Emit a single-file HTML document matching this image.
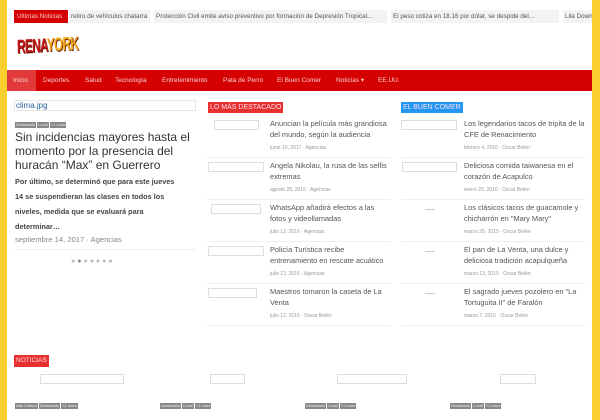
<!DOCTYPE html>
<html><head><meta charset="utf-8"><style>
*{margin:0;padding:0;box-sizing:border-box}
body{width:600px;height:400px;overflow:hidden;background:#f9d030;font-family:"Liberation Sans","DejaVu Sans",sans-serif;position:relative}
.pg{position:absolute;left:7px;top:0;width:585px;height:420px;background:#fff}
.a{position:absolute;white-space:nowrap}
.tick{font-size:6.3px;color:#555;top:10px;height:13px;line-height:13px;background:#f3f3f3;overflow:hidden}
.nav{position:absolute;left:7px;top:70px;width:585px;height:21px;background:#d50000}
.nav span{position:absolute;top:0;line-height:21px;font-size:6.5px;color:#f8d0d0}
.hd{position:absolute;height:11px;line-height:11px;font-size:7px;color:#fde;padding:0 2px}
.it{position:absolute;width:184px;height:42px;border-bottom:1px solid #eee}
.it .im{position:absolute;top:4px;height:10px;border:1px solid #ddd}
.it .t{position:absolute;left:63px;top:3px;width:122px;font-size:7.4px;line-height:10.5px;color:#555;white-space:normal}
.it .d{position:absolute;left:63px;top:29px;font-size:5px;color:#999;white-space:nowrap}
.it .dash{position:absolute;left:24px;top:9px;width:10px;height:1px;background:#ccc}
.tag{display:inline-block;background:#888;color:#eee;font-size:4px;height:6px;line-height:6px;padding:0 1px;margin-right:1px}
.box{position:absolute;height:10px;border:1px solid #ddd}
</style></head><body>
<div class="pg"></div>
<div class="a" style="left:14px;top:10px;height:13px;width:54px;background:#d50000;color:#fcc;font-size:6.3px;line-height:13px;padding-left:3px">Ultimas Noticias</div>
<div class="a tick" style="left:69px;width:81px;padding-left:2px">retiro de vehículos chatarra</div>
<div class="a tick" style="left:154px;width:233px;padding-left:2px">Protección Civil emite aviso preventivo por formación de Depresión Tropical...</div>
<div class="a tick" style="left:391px;width:168px;padding-left:2px">El peso cotiza en 18.16 por dólar, se despide del...</div>
<div class="a tick" style="left:563px;width:29px;padding-left:2px">Lila Downs</div>
<div class="a" style="left:17px;top:37px;font-size:19px;font-weight:bold;letter-spacing:-1px;transform:scaleX(.62) rotate(-2deg);transform-origin:left;line-height:22px;text-shadow:1px 1px 0 #6a1000"><span style="color:#c01818">RENA</span><span style="color:#f0a818">YORK</span></div>
<div class="nav"></div>
<div class="a" style="left:7px;top:70px;width:29px;height:21px;background:#e23a3a"></div>
<div class="nav" style="background:none">
<span style="left:6px">Inicio</span><span style="left:36px">Deportes</span><span style="left:78px">Salud</span><span style="left:108px">Tecnología</span><span style="left:155px">Entretenimiento</span><span style="left:216px">Pata de Perro</span><span style="left:270px">El Buen Comer</span><span style="left:329px">Noticias ▾</span><span style="left:371px">EE.UU.</span>
</div>
<div class="a" style="left:14px;top:100px;width:182px;height:11px;border:1px solid #e5e5e5;font-size:8px;line-height:10px;color:#2a5d9a;padding-left:1px">clima.jpg</div>
<div class="a" style="left:15px;top:119px;line-height:6px"><span class="tag">Destacado</span><span class="tag">Local</span><span class="tag">+1 more</span></div>
<div class="a" style="left:15px;top:130px;width:185px;white-space:normal;font-size:12px;line-height:14px;color:#333">Sin incidencias mayores hasta el momento por la presencia del huracán “Max” en Guerrero</div>
<div class="a" style="left:15px;top:174px;font-size:7.3px;font-weight:bold;line-height:15px;color:#444">Por último, se determinó que para este jueves<br>14 se suspendieran las clases en todos los<br>niveles, medida que se evaluará para<br>determinar…</div>
<div class="a" style="left:15px;top:235px;font-size:7.6px;color:#888">septiembre 14, 2017 · Agencias</div>
<div class="a" style="left:14px;top:249px;width:182px;height:1px;background:#eee"></div>
<div class="a" style="left:71px;top:258px;font-size:7px;color:#bbb;letter-spacing:2px">●<span style="color:#888">●</span>●●●●●</div>
<div class="hd" style="left:208px;top:102px;background:#e8312f">LO MÁS DESTACADO</div>
<div class="hd" style="left:401px;top:102px;background:#2196f3">EL BUEN COMER</div>
<div class="it" style="left:207px;top:116px"><div class="im" style="left:7px;width:45px"></div><div class="t">Anuncian la película más grandiosa del mundo, según la audiencia</div><div class="d">junio 10, 2017 · Agencias</div></div>
<div class="it" style="left:207px;top:158px"><div class="im" style="left:1px;width:56px"></div><div class="t">Angela Nikolau, la rusa de las selfis extremas</div><div class="d">agosto 28, 2016 · Agencias</div></div>
<div class="it" style="left:207px;top:200px"><div class="im" style="left:4px;width:50px"></div><div class="t">WhatsApp añadirá efectos a las fotos y videollamadas</div><div class="d">julio 12, 2016 · Agencias</div></div>
<div class="it" style="left:207px;top:242px"><div class="im" style="left:1px;width:56px"></div><div class="t">Policía Turística recibe entrenamiento en rescate acuático</div><div class="d">julio 12, 2016 · Agencias</div></div>
<div class="it" style="left:207px;top:284px"><div class="im" style="left:1px;width:49px"></div><div class="t">Maestros tomaron la caseta de La Venta</div><div class="d">julio 12, 2016 · Oscar Belén</div></div>
<div class="it" style="left:401px;top:116px"><div class="im" style="left:0;width:56px"></div><div class="t">Los legendarios tacos de tripita de la CFE de Renacimiento</div><div class="d">febrero 4, 2016 · Oscar Belén</div></div>
<div class="it" style="left:401px;top:158px"><div class="im" style="left:1px;width:55px"></div><div class="t">Deliciosa comida taiwanesa en el corazón de Acapulco</div><div class="d">enero 20, 2016 · Oscar Belén</div></div>
<div class="it" style="left:401px;top:200px"><div class="dash"></div><div class="t">Los clásicos tacos de guacamole y chicharrón en "Mary Mary"</div><div class="d">marzo 25, 2015 · Oscar Belén</div></div>
<div class="it" style="left:401px;top:242px"><div class="dash"></div><div class="t">El pan de La Venta, una dulce y deliciosa tradición acapulqueña</div><div class="d">marzo 13, 2015 · Oscar Belén</div></div>
<div class="it" style="left:401px;top:284px"><div class="dash"></div><div class="t">El sagrado jueves pozolero en "La Tortuguita II" de Faralón</div><div class="d">marzo 7, 2015 · Oscar Belén</div></div>
<div class="hd" style="left:14px;top:355px;height:12px;line-height:12px;background:#e8312f;font-size:6.5px">NOTICIAS</div>
<div class="box" style="left:40px;top:374px;width:84px"></div>
<div class="box" style="left:210px;top:374px;width:35px"></div>
<div class="box" style="left:337px;top:374px;width:70px"></div>
<div class="box" style="left:500px;top:374px;width:36px"></div>
<div class="a" style="left:15px;top:394px"><span class="tag">Alta Cultura</span><span class="tag">Destacado</span><span class="tag">+1 more</span></div>
<div class="a" style="left:160px;top:394px"><span class="tag">Destacado</span><span class="tag">Local</span><span class="tag">+1 more</span></div>
<div class="a" style="left:305px;top:394px"><span class="tag">Destacado</span><span class="tag">Local</span><span class="tag">+1 more</span></div>
<div class="a" style="left:450px;top:394px"><span class="tag">Destacado</span><span class="tag">Local</span><span class="tag">+1 more</span></div>
</body></html>
